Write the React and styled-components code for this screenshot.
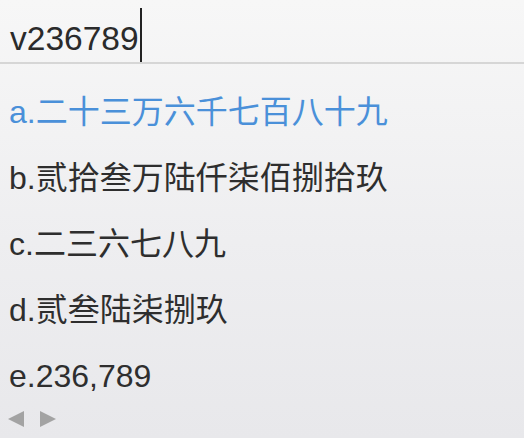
import React from "react";
import styled, { createGlobalStyle } from "styled-components";

const GlobalStyle = createGlobalStyle`
  html, body {
    margin: 0;
    padding: 0;
  }
  body {
    font-family: "Liberation Sans", "Noto Sans CJK SC", sans-serif;
  }
`;

const Panel = styled.div`
  width: 524px;
  height: 438px;
  overflow: hidden;
  background: linear-gradient(to bottom, #f7f7f7 0%, #eeeef0 55%, #e8e8eb 100%);
  display: flex;
  flex-direction: column;
`;

const InputBar = styled.div`
  height: 62px;
  border-bottom: 2px solid #d6d6d6;
  display: flex;
  align-items: flex-end;
  padding-left: 10px;
  font-size: 33.5px;
  color: #2b2b2b;
`;

const Typed = styled.span`
  line-height: 33px;
  margin-bottom: 7px;
`;

const Caret = styled.span`
  display: inline-block;
  width: 2px;
  height: 54px;
  margin-left: 1px;
  background: #222;
`;

const List = styled.div`
  display: flex;
  flex-direction: column;
  padding: 15px 0 0 9px;
`;

const Candidate = styled.div`
  height: 66px;
  line-height: 66px;
  font-size: 32px;
  white-space: nowrap;
  color: ${(p) => (p.$active ? "#4a90d9" : "#2e2e2e")};
`;

const Pager = styled.div`
  display: flex;
  gap: 16px;
  padding-left: 8px;
  margin-top: 2px;
`;

const Arrow = ({ dir }) => (
  <svg width="16" height="16" viewBox="0 0 16 16">
    {dir === "left" ? (
      <path d="M16 0 L0 8 L16 16 Z" fill="#a3a3a3" />
    ) : (
      <path d="M0 0 L16 8 L0 16 Z" fill="#a3a3a3" />
    )}
  </svg>
);

const candidates = [
  "a.二十三万六千七百八十九",
  "b.贰拾叁万陆仟柒佰捌拾玖",
  "c.二三六七八九",
  "d.贰叁陆柒捌玖",
  "e.236,789",
];

export default function App() {
  return (
    <>
      <GlobalStyle />
      <Panel>
        <InputBar>
          <Typed>v236789</Typed>
          <Caret />
        </InputBar>
        <List>
          {candidates.map((c, i) => (
            <Candidate key={c} $active={i === 0}>
              {c}
            </Candidate>
          ))}
        </List>
        <Pager>
          <Arrow dir="left" />
          <Arrow dir="right" />
        </Pager>
      </Panel>
    </>
  );
}
